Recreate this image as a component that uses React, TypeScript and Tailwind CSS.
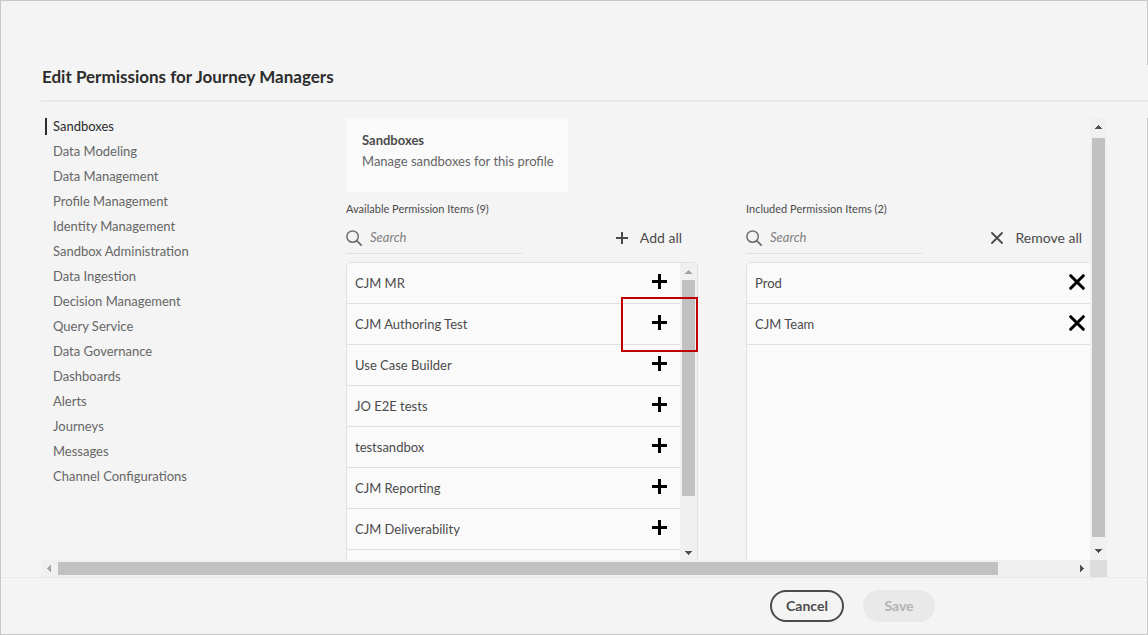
import React from "react";

const sections = [
  "Sandboxes",
  "Data Modeling",
  "Data Management",
  "Profile Management",
  "Identity Management",
  "Sandbox Administration",
  "Data Ingestion",
  "Decision Management",
  "Query Service",
  "Data Governance",
  "Dashboards",
  "Alerts",
  "Journeys",
  "Messages",
  "Channel Configurations",
];

const available = [
  "CJM MR",
  "CJM Authoring Test",
  "Use Case Builder",
  "JO E2E tests",
  "testsandbox",
  "CJM Reporting",
  "CJM Deliverability",
];

const included = ["Prod", "CJM Team"];

function SearchField({ label }: { label: string }) {
  return (
    <label className="flex h-8 w-44 items-center gap-2 border-b border-[#e1e1e1]">
      <svg className="size-4 shrink-0" viewBox="0 0 16 16" fill="none" stroke="#6e6e6e" strokeWidth="1.5">
        <circle cx="6.6" cy="6.6" r="5.7" />
        <path d="M10.7 10.7 15.2 15.2" strokeWidth="1.8" strokeLinecap="round" />
      </svg>
      <input
        type="text"
        aria-label={label}
        placeholder="Search"
        className="w-full min-w-0 bg-transparent text-[13px] text-[#4b4b4b] italic outline-none placeholder:text-[#808080]"
      />
    </label>
  );
}

function AddIcon() {
  return (
    <svg className="size-4" viewBox="0 0 16 16" fill="#000">
      <path d="M6 0h3v6h6v3H9v6H6V9H0V6h6z" />
    </svg>
  );
}

function RemoveIcon() {
  return (
    <svg className="size-4" viewBox="0 0 16 16" fill="none" stroke="#000" strokeWidth="3" strokeLinecap="round">
      <path d="M1.7 1.7 14.3 14.3M14.3 1.7 1.7 14.3" />
    </svg>
  );
}

function Row({ name, action, children }: { name: string; action: string; children: React.ReactNode }) {
  return (
    <li className="flex h-[41px] items-center justify-between border-b border-[#e1e1e1] pr-3 pl-2">
      <span className="pt-0.5">{name}</span>
      <button type="button" aria-label={`${action} ${name}`} className="pb-0.5">
        {children}
      </button>
    </li>
  );
}

function Arrow({ dir, color = "#505050" }: { dir: "up" | "down" | "left" | "right"; color?: string }) {
  const paths = {
    up: "M8 7h1v1h1v1h1v1h1v1H5v-1h1V9h1V8h1z",
    down: "M5 6h7v1h-1v1h-1v1H9v1H8V9H7V8H6V7H5z",
    left: "M10 5v7H9v-1H8v-1H7V9H6V8h1V7h1V6h1V5z",
    right: "M7 5h1v1h1v1h1v1h1v1h-1v1H9v1H8v1H7z",
  };
  return (
    <svg className="size-[17px] shrink-0" viewBox="0 0 17 17" fill={color} shapeRendering="crispEdges">
      <path d={paths[dir]} />
    </svg>
  );
}

export default function App() {
  return (
    <div className="flex h-screen flex-col overflow-hidden border-y border-l border-[#c8c8c8] bg-[#f4f4f4] font-['Lato','Open_Sans',sans-serif] text-[13px] text-[#4b4b4b]">
      <div className="h-16 shrink-0 border-r border-[#c8c8c8]" />

      <header className="mb-4 ml-10 shrink-0 border-b-2 border-[#e9e9e9] pb-[11px] pl-px">
        <h1 className="text-[17px] leading-6 font-bold text-[#2c2c2c]">Edit Permissions for Journey Managers</h1>
      </header>

      <div className="flex min-h-0 flex-1 flex-col border-r border-[#c8c8c8] px-10">
        <div className="flex min-h-0 flex-1">
          <div className="flex min-h-0 min-w-0 flex-1 overflow-hidden">
            <nav className="flex w-[305px] shrink-0 flex-col gap-2 pl-1">
              {sections.map((s, i) => (
                <a
                  key={s}
                  href="#"
                  className={
                    i === 0
                      ? "border-l-2 border-[#2c2c2c] pl-1.5 leading-[17px] text-[#2c2c2c]"
                      : "border-l-2 border-transparent pl-1.5 leading-[17px] text-[#666666]"
                  }
                >
                  {s}
                </a>
              ))}
            </nav>

            <main className="flex shrink-0 flex-col">
              <section className="w-[222px] bg-[#fafafa] px-4 pt-3 pb-5 leading-[21px] whitespace-nowrap">
                <h2 className="font-bold">Sandboxes</h2>
                <p className="text-[#666666]">Manage sandboxes for this profile</p>
              </section>

              <div className="mt-2 flex gap-12">
                <section className="w-[352px]">
                  <h3 className="mb-1 text-[11px] leading-[18px]">Available Permission Items (9)</h3>
                  <div className="mb-2 flex justify-between pr-4">
                    <SearchField label="Search available items" />
                    <button type="button" className="flex items-center gap-3 text-[14px]">
                      <svg className="size-3" viewBox="0 0 12 12" fill="#4b4b4b">
                        <path d="M5 0h2v5h5v2H7v5H5V7H0V5h5z" />
                      </svg>
                      <span className="pb-0.5">Add all</span>
                    </button>
                  </div>
                  <div className="relative">
                    <div className="flex h-[301px] overflow-hidden rounded-t border border-[#e1e1e1] bg-[#fafafa]">
                      <ul className="flex-1">
                        {available.map((name) => (
                          <Row key={name} name={name} action="Add">
                            <AddIcon />
                          </Row>
                        ))}
                      </ul>
                      <div className="flex w-[17px] flex-col justify-between bg-[#f0f0f0]">
                        <Arrow dir="up" color="#a3a3a3" />
                        <div className="flex-1 px-0.5">
                          <div className="h-[81.5%] bg-[#c1c1c1]" />
                        </div>
                        <Arrow dir="down" />
                      </div>
                    </div>
                    <div className="pointer-events-none absolute top-[35px] right-0 h-[55px] w-[77px] border-2 border-[#c00000]" />
                  </div>
                </section>

                <section className="w-[352px]">
                  <h3 className="mb-1 text-[11px] leading-[18px]">Included Permission Items (2)</h3>
                  <div className="mb-2 flex justify-between pr-4">
                    <SearchField label="Search included items" />
                    <button type="button" className="flex items-center gap-3 text-[14px]">
                      <svg className="size-3" viewBox="0 0 12 12" fill="none" stroke="#4b4b4b" strokeWidth="1.8" strokeLinecap="round">
                        <path d="M1 1 11 11M11 1 1 11" />
                      </svg>
                      <span className="pb-0.5">Remove all</span>
                    </button>
                  </div>
                  <ul className="h-[301px] rounded-t border border-[#e1e1e1] bg-[#fafafa]">
                    {included.map((name) => (
                      <Row key={name} name={name} action="Remove">
                        <RemoveIcon />
                      </Row>
                    ))}
                  </ul>
                </section>
              </div>
            </main>
          </div>

          <div className="flex w-[17px] shrink-0 flex-col bg-[#f0f0f0]">
            <Arrow dir="up" />
            <div className="flex-1 px-0.5 pt-[3px] pb-1.5">
              <div className="h-full bg-[#c1c1c1]" />
            </div>
            <Arrow dir="down" />
          </div>
        </div>

        <div className="flex h-[17px] shrink-0 bg-[#f0f0f0]">
          <Arrow dir="left" color="#a3a3a3" />
          <div className="flex-1 py-0.5">
            <div className="h-full w-[92.6%] bg-[#c1c1c1]" />
          </div>
          <Arrow dir="right" />
          <div className="w-[17px] bg-[#dcdcdc]" />
        </div>
      </div>

      <footer className="flex shrink-0 items-center justify-end gap-[19px] border-t border-r border-t-[#e9e9e9] border-r-[#c8c8c8] py-3 pr-[212px] text-[14px] font-bold">
        <button type="button" className="h-8 w-[74px] rounded-full border-2 border-[#4b4b4b] pb-0.5">
          Cancel
        </button>
        <button type="button" disabled className="h-8 w-[72px] rounded-full bg-[#e9e9e9] pb-0.5 text-[#b3b3b3]">
          Save
        </button>
      </footer>
    </div>
  );
}
